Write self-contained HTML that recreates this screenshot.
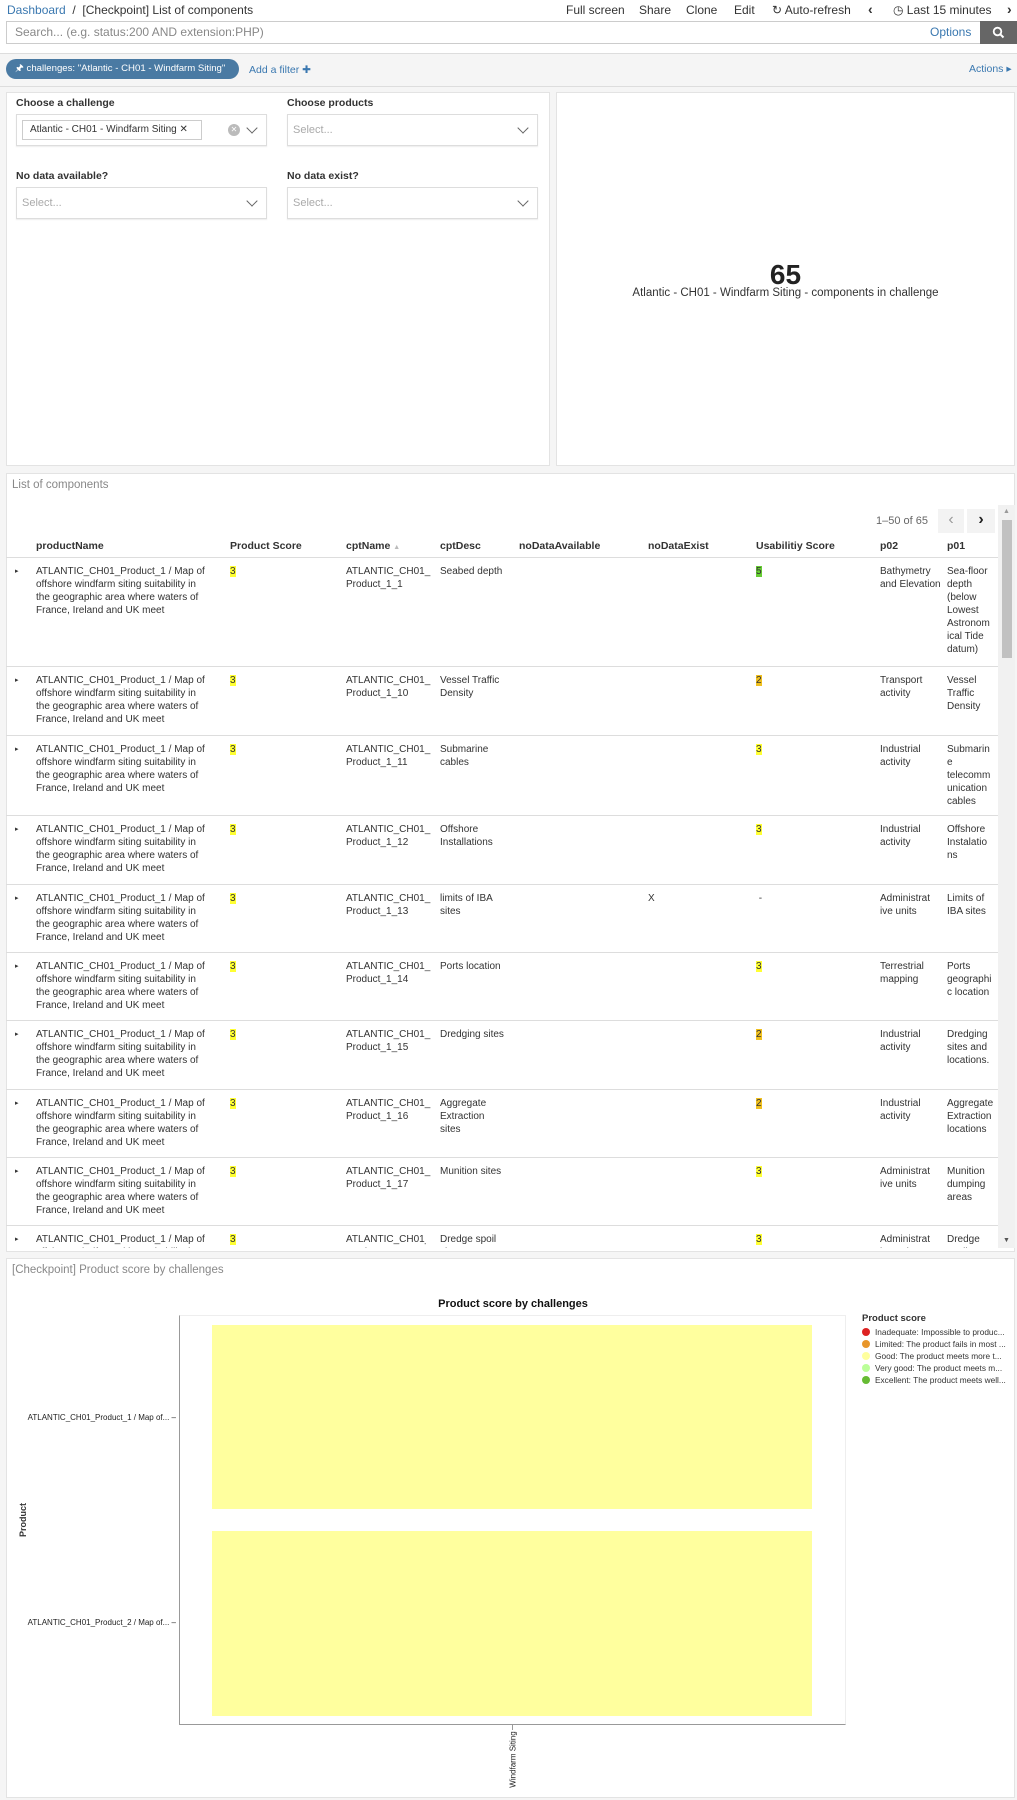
<!DOCTYPE html>
<html><head><meta charset="utf-8">
<style>
*{box-sizing:border-box;margin:0;padding:0}
body{width:1017px;height:1789px;overflow:hidden;background:#f5f5f5;font-family:"Liberation Sans",sans-serif;color:#333;position:relative}
.a{position:absolute}
.top{left:0;top:0;width:1017px;height:53px;background:#fff}
.fs{font-size:12px}
.panel{background:#fff;border:1px solid #e3e3e3}
.lbl{font-size:10.5px;font-weight:bold;color:#333}
.sel{border:1px solid #ddd;background:#fff;box-shadow:0 1px 1px rgba(0,0,0,.08)}
.ph{font-size:11px;color:#aaa}
.chev{width:8px;height:8px;border-right:1.3px solid #666;border-bottom:1.3px solid #666;transform:rotate(45deg)}
.cell{position:absolute;font-size:10px;line-height:13px;color:#333}
.hd{position:absolute;top:540px;font-size:10.5px;font-weight:bold;color:#333}
.hl{background:#ffff33}
.g{background:#66cc33}
.o{background:#f0c020}
.row{position:absolute;left:6px;width:992px;border-top:1px solid #ddd}
.leg{position:absolute;left:862px;font-size:8.3px;color:#333;white-space:nowrap}
.dot{display:inline-block;width:8px;height:8px;border-radius:50%;margin-right:5px;vertical-align:-1px}
</style></head><body>
<div class="a top"></div>
<div class="a fs" style="left:7px;top:3px"><span style="color:#3a78b0">Dashboard</span> &nbsp;/ &nbsp;[Checkpoint] List of components</div>
<div class="a fs" style="left:566px;top:3px">Full screen</div>
<div class="a fs" style="left:639px;top:3px">Share</div>
<div class="a fs" style="left:686px;top:3px">Clone</div>
<div class="a fs" style="left:734px;top:3px">Edit</div>
<div class="a fs" style="left:772px;top:3px">&#x21bb; Auto-refresh</div>
<div class="a fs" style="left:868px;top:1px;font-weight:bold;font-size:14px">&#x2039;</div>
<div class="a fs" style="left:893px;top:3px">&#x25F7; Last 15 minutes</div>
<div class="a fs" style="left:1007px;top:1px;font-weight:bold;font-size:14px">&#x203A;</div>
<div class="a" style="left:6px;top:21px;width:975px;height:23px;border:1px solid #ccc;background:#fff"></div>
<div class="a" style="left:15px;top:25px;font-size:12px;color:#888">Search... (e.g. status:200 AND extension:PHP)</div>
<div class="a" style="left:930px;top:25px;font-size:12px;color:#3a78b0">Options</div>
<div class="a" style="left:980px;top:21px;width:37px;height:23px;background:#666"></div>
<svg class="a" style="left:992px;top:26px" width="13" height="13" viewBox="0 0 13 13"><circle cx="5.5" cy="5.5" r="3.8" fill="none" stroke="#fff" stroke-width="1.8"/><path d="M8.3 8.3L11.5 11.5" stroke="#fff" stroke-width="2"/></svg>
<div class="a" style="left:0;top:53px;width:1017px;height:1px;background:#ddd"></div>
<div class="a" style="left:6px;top:59px;width:233px;height:20px;border-radius:10px;background:#4a7aa3;color:#fff;font-size:9.6px;line-height:20px;padding-left:9px;white-space:nowrap;overflow:hidden">&#x1F588;&#xFE0E; challenges: "Atlantic - CH01 - Windfarm Siting"</div>
<div class="a" style="left:249px;top:64px;font-size:10.5px;color:#3a78b0">Add a filter &#x271A;</div>
<div class="a" style="left:969px;top:63px;font-size:10.5px;color:#3a78b0">Actions &#x25B8;</div>
<div class="a" style="left:0;top:86px;width:1017px;height:1px;background:#ddd"></div>

<div class="a panel" style="left:6px;top:92px;width:544px;height:374px"></div>
<div class="a lbl" style="left:16px;top:97px">Choose a challenge</div>
<div class="a lbl" style="left:287px;top:97px">Choose products</div>
<div class="a sel" style="left:16px;top:114px;width:251px;height:32px"></div>
<div class="a" style="left:22px;top:120px;width:180px;height:20px;border:1px solid #ccc;font-size:10px;line-height:18px;padding-left:7px;color:#333;white-space:nowrap">Atlantic - CH01 - Windfarm Siting &#x2715;</div>
<div class="a" style="left:228px;top:124px;width:12px;height:12px;border-radius:50%;background:#bbb;color:#fff;font-size:8px;text-align:center;line-height:12px">&#x2715;</div>
<div class="a chev" style="left:248px;top:124px"></div>
<div class="a sel" style="left:287px;top:114px;width:251px;height:32px"></div>
<div class="a ph" style="left:293px;top:124px">Select...</div>
<div class="a chev" style="left:519px;top:124px"></div>
<div class="a lbl" style="left:16px;top:170px">No data available?</div>
<div class="a lbl" style="left:287px;top:170px">No data exist?</div>
<div class="a sel" style="left:16px;top:187px;width:251px;height:32px"></div>
<div class="a ph" style="left:22px;top:197px">Select...</div>
<div class="a chev" style="left:248px;top:197px"></div>
<div class="a sel" style="left:287px;top:187px;width:251px;height:32px"></div>
<div class="a ph" style="left:293px;top:197px">Select...</div>
<div class="a chev" style="left:519px;top:197px"></div>

<div class="a panel" style="left:556px;top:92px;width:459px;height:374px"></div>
<div class="a" style="left:556px;top:259px;width:459px;text-align:center;font-size:28px;font-weight:bold;color:#222">65</div>
<div class="a" style="left:556px;top:287px;width:459px;text-align:center;font-size:11.5px;color:#333">Atlantic - CH01 - Windfarm Siting - components in challenge</div>

<div class="a panel" style="left:6px;top:473px;width:1009px;height:779px;overflow:hidden"></div>
<div class="a" style="left:12px;top:479px;font-size:11.5px;color:#888">List of components</div>
<div class="a" style="left:876px;top:515px;font-size:11px;color:#666">1–50 of 65</div>
<div class="a" style="left:938px;top:509px;width:26px;height:24px;background:#f3f3f3;color:#999;font-size:16px;text-align:center;line-height:22px">&#x2039;</div>
<div class="a" style="left:967px;top:509px;width:28px;height:24px;background:#f3f3f3;color:#222;font-size:16px;font-weight:bold;text-align:center;line-height:22px">&#x203A;</div>
<div class="a" style="left:998px;top:505px;width:17px;height:743px;background:#f1f1f1"></div>
<div class="a" style="left:1002px;top:520px;width:10px;height:138px;background:#c1c1c1"></div>
<div class="a" style="left:1003px;top:508px;font-size:7px;color:#999">&#x25B2;</div>
<div class="a" style="left:1003px;top:1237px;font-size:7px;color:#555">&#x25BC;</div>

<div class="hd" style="left:36px">productName</div>
<div class="hd" style="left:230px">Product Score</div>
<div class="hd" style="left:346px">cptName <span style="color:#bbb;font-size:7px">&#x25B2;</span></div>
<div class="hd" style="left:440px">cptDesc</div>
<div class="hd" style="left:519px">noDataAvailable</div>
<div class="hd" style="left:648px">noDataExist</div>
<div class="hd" style="left:756px">Usabilitiy Score</div>
<div class="hd" style="left:880px">p02</div>
<div class="hd" style="left:947px">p01</div>

<div class="row" style="top:557px"></div>
<div class="row" style="top:666px"></div>
<div class="row" style="top:735px"></div>
<div class="row" style="top:815px"></div>
<div class="row" style="top:884px"></div>
<div class="row" style="top:952px"></div>
<div class="row" style="top:1020px"></div>
<div class="row" style="top:1089px"></div>
<div class="row" style="top:1157px"></div>
<div class="row" style="top:1225px"></div>

<div id="rows"></div>
<script>
var R=[[557,"1","Seabed depth","","","5","g","Bathymetry and Elevation","Sea-floor depth (below Lowest Astronom ical Tide datum)"],
[666,"10","Vessel Traffic Density","","","2","o","Transport activity","Vessel Traffic Density"],
[735,"11","Submarine cables","","","3","hl","Industrial activity","Submarin e telecomm unication cables"],
[815,"12","Offshore Installations","","","3","hl","Industrial activity","Offshore Instalatio ns"],
[884,"13","limits of IBA sites","","X","-","","Administrat ive units","Limits of IBA sites"],
[952,"14","Ports location","","","3","hl","Terrestrial mapping","Ports geographi c location"],
[1020,"15","Dredging sites","","","2","o","Industrial activity","Dredging sites and locations."],
[1089,"16","Aggregate Extraction sites","","","2","o","Industrial activity","Aggregate Extraction locations"],
[1157,"17","Munition sites","","","3","hl","Administrat ive units","Munition dumping areas"],
[1225,"18","Dredge spoil sites","","","3","hl","Administrat ive units","Dredge spoil areas"]];
var h='';
R.forEach(function(r){var t=r[0]+8;var clip=r[0]>1200?'height:'+(1248-t)+'px;overflow:hidden;':'';
function c(l,w,txt,extra){return '<div class="cell" style="top:'+t+'px;left:'+l+'px;width:'+w+'px;'+clip+(extra||'')+'">'+txt+'</div>';}
h+='<div class="cell" style="top:'+t+'px;left:15px;font-size:7px">&#x25B8;</div>';
h+=c(36,172,'ATLANTIC_CH01_Product_1 / Map of offshore windfarm siting suitability in the geographic area where waters of France, Ireland and UK meet');
h+=c(230,40,'<span class="hl">3</span>');
h+=c(346,80,'ATLANTIC_CH01_ Product_1_'+r[1]);
h+=c(440,64,r[2]);
h+=c(648,40,r[4]);
h+=c(756,40,r[6]?'<span class="'+r[6]+'">'+r[5]+'</span>':'&nbsp;'+r[5]);
h+=c(880,62,r[7]);
h+=c(947,50,r[8]);
});
document.getElementById('rows').innerHTML=h;
</script>

<div class="a panel" style="left:6px;top:1258px;width:1009px;height:540px"></div>
<div class="a" style="left:12px;top:1264px;font-size:11.5px;color:#888">[Checkpoint] Product score by challenges</div>
<div class="a" style="left:380px;top:1298px;width:266px;text-align:center;font-size:11px;font-weight:bold;color:#111">Product score by challenges</div>
<div class="a" style="left:179px;top:1315px;width:667px;height:410px;border-left:1px solid #999;border-bottom:1px solid #999;border-top:1px solid #eee;border-right:1px solid #eee"></div>
<div class="a" style="left:212px;top:1325px;width:600px;height:184px;background:#ffff9e"></div>
<div class="a" style="left:212px;top:1531px;width:600px;height:185px;background:#ffff9e"></div>
<div class="a" style="left:10px;top:1413px;width:166px;text-align:right;font-size:8px;color:#222;white-space:nowrap">ATLANTIC_CH01_Product_1 / Map of... –</div>
<div class="a" style="left:10px;top:1618px;width:166px;text-align:right;font-size:8px;color:#222;white-space:nowrap">ATLANTIC_CH01_Product_2 / Map of... –</div>
<div class="a" style="left:-2px;top:1515px;width:50px;text-align:center;font-size:9px;font-weight:bold;transform:rotate(-90deg)">Product</div>
<div class="a" style="left:512px;top:1725px;width:1px;height:5px;background:#999"></div>
<div class="a" style="left:473px;top:1755px;width:80px;text-align:center;font-size:8px;color:#222;transform:rotate(-90deg);white-space:nowrap">Windfarm Siting</div>
<div class="leg" style="top:1313px;font-weight:bold;font-size:9.5px">Product score</div>
<div class="leg" style="top:1327px"><span class="dot" style="background:#dd2222"></span>Inadequate: Impossible to produc...</div>
<div class="leg" style="top:1339px"><span class="dot" style="background:#e8962a"></span>Limited: The product fails in most ...</div>
<div class="leg" style="top:1351px"><span class="dot" style="background:#ffff9e"></span>Good: The product meets more t...</div>
<div class="leg" style="top:1363px"><span class="dot" style="background:#bbff99"></span>Very good: The product meets m...</div>
<div class="leg" style="top:1375px"><span class="dot" style="background:#66bb33"></span>Excellent: The product meets well...</div>
</body></html>
